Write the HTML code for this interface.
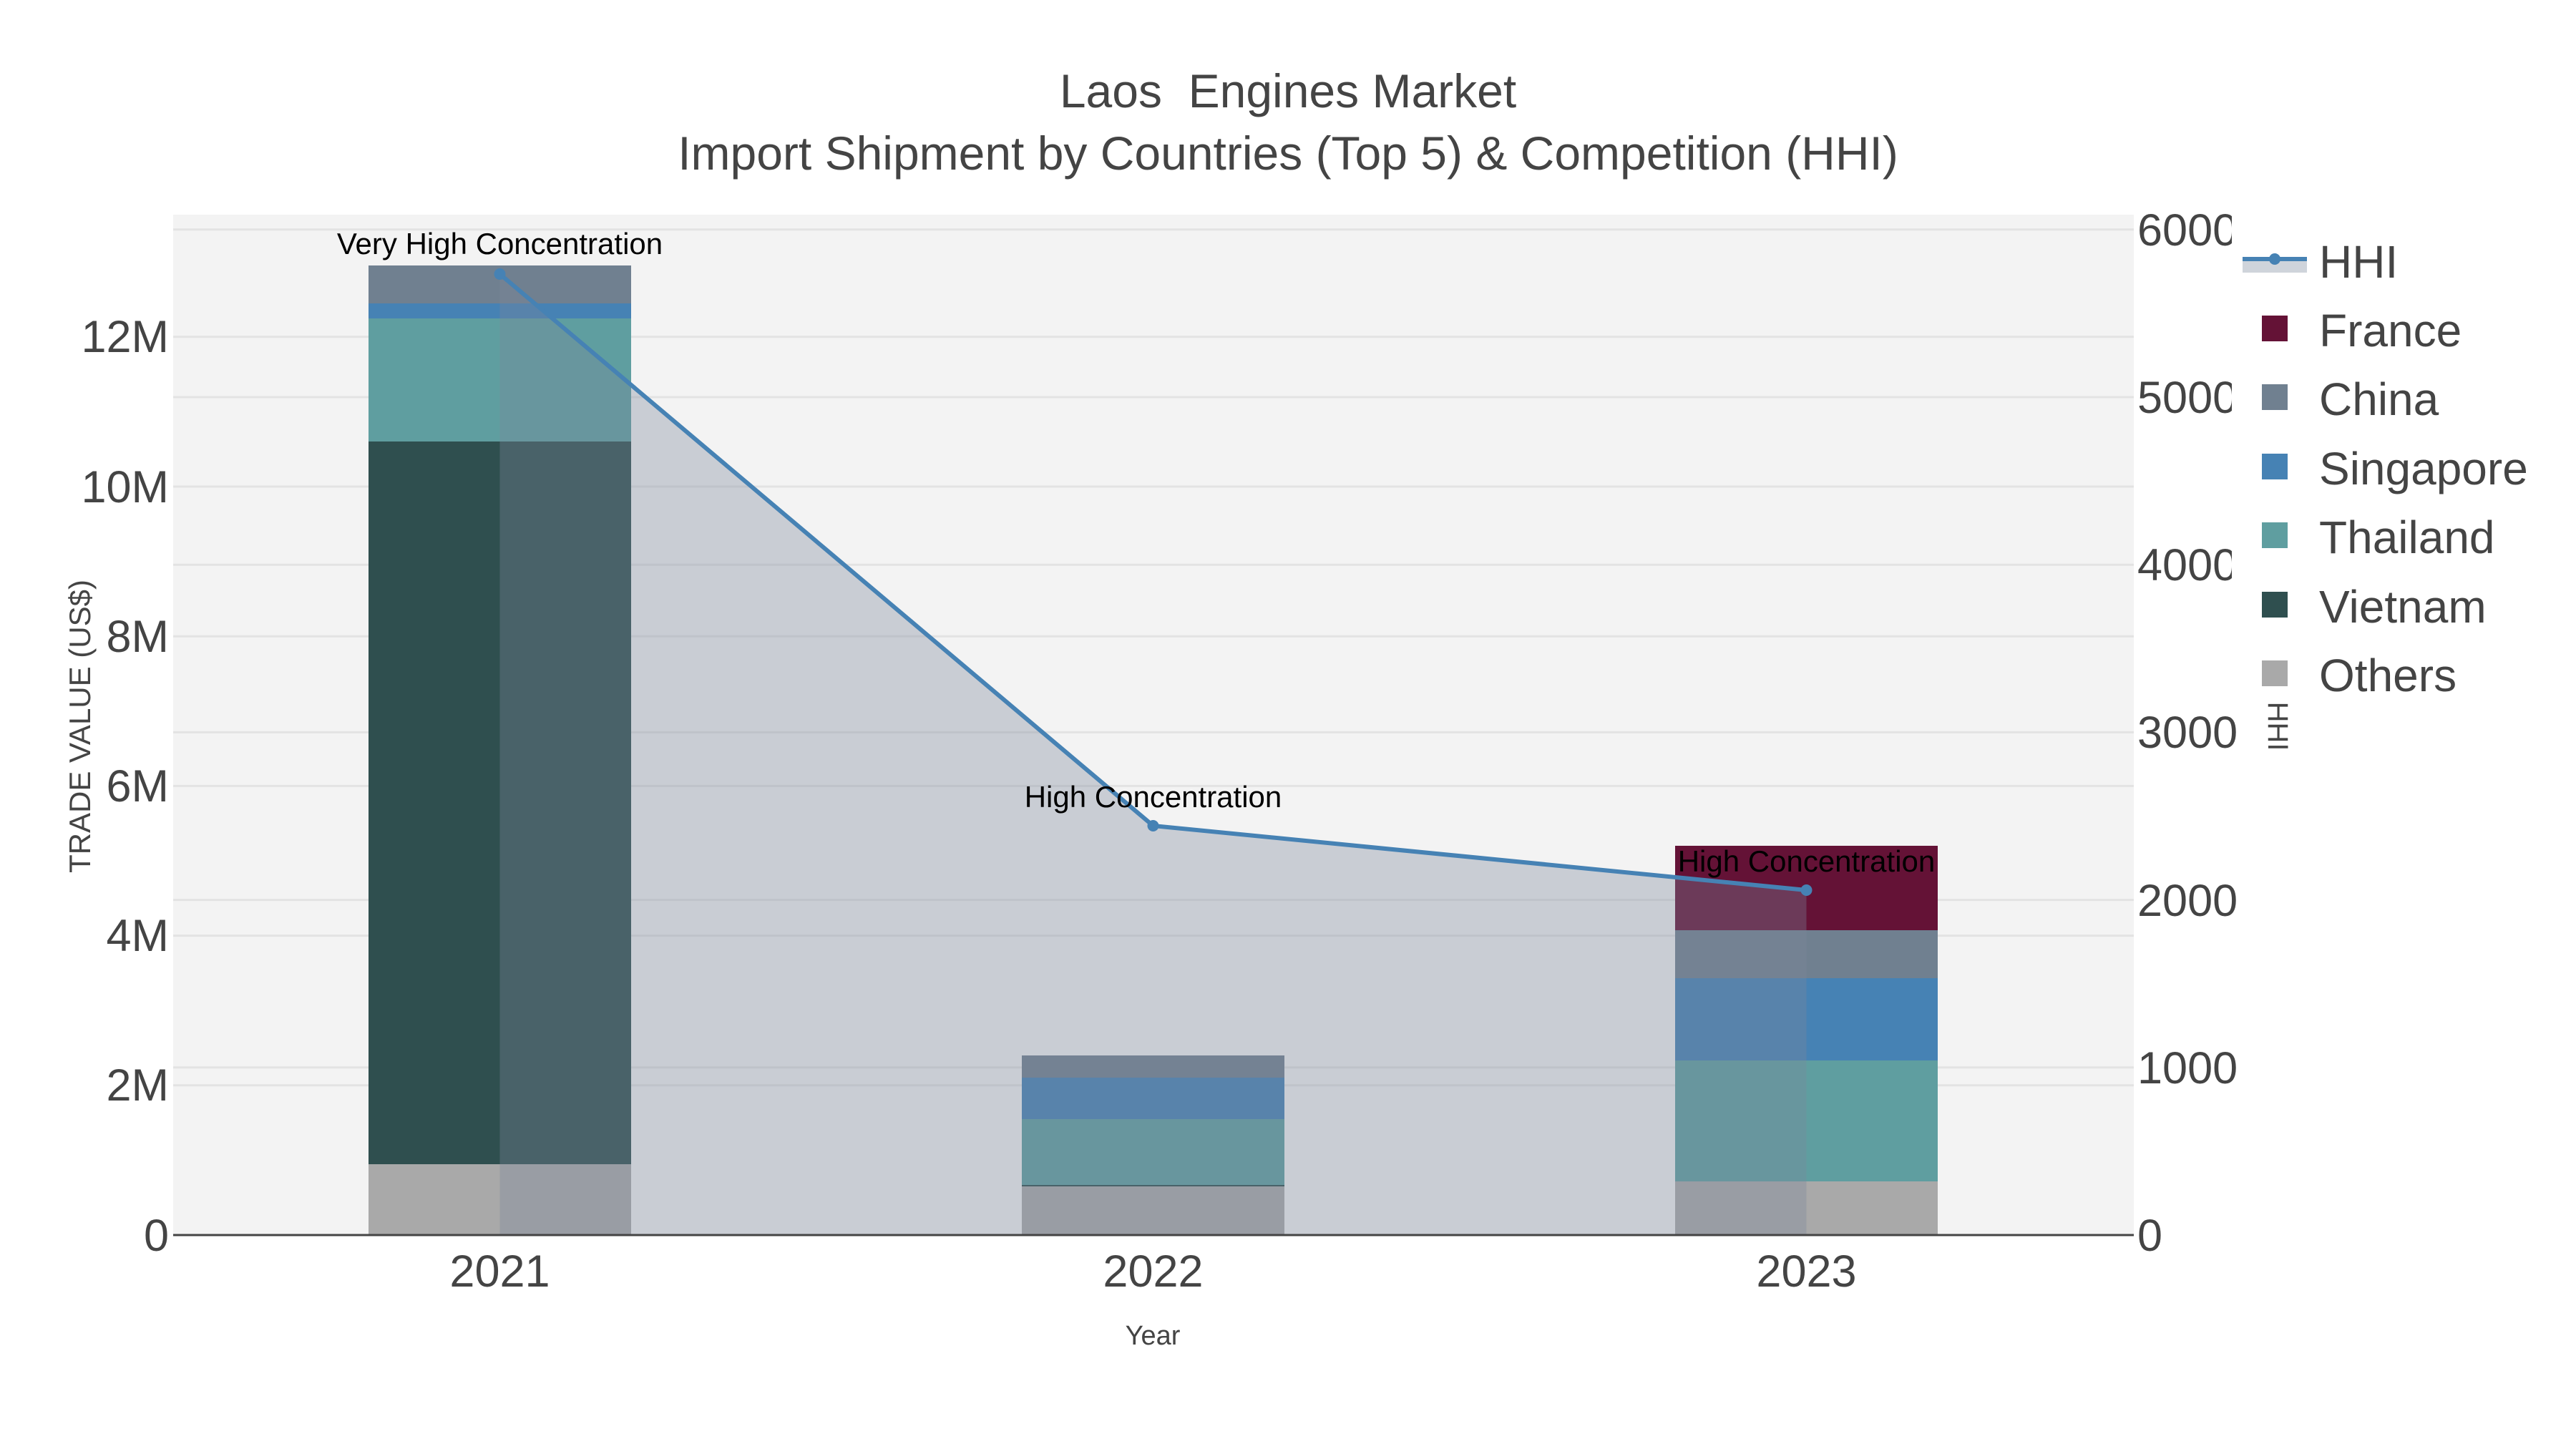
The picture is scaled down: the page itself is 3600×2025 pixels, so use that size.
<!DOCTYPE html>
<html><head><meta charset="utf-8"><style>html,body{margin:0;padding:0;background:#fff}svg{display:block}</style></head>
<body>
<svg width="3600" height="2025" viewBox="0 0 3600 2025" xmlns="http://www.w3.org/2000/svg" font-family="Liberation Sans, Arial, sans-serif">
<rect width="3600" height="2025" fill="#fff"/>
<rect x="242" y="300" width="2740" height="1426" fill="#f3f3f3"/>
<g stroke="#e3e3e3" stroke-width="3">
<line x1="242" x2="2982" y1="1516.8" y2="1516.8"/><line x1="242" x2="2982" y1="1307.6" y2="1307.6"/>
<line x1="242" x2="2982" y1="1098.4" y2="1098.4"/><line x1="242" x2="2982" y1="889.2" y2="889.2"/>
<line x1="242" x2="2982" y1="680" y2="680"/><line x1="242" x2="2982" y1="470.8" y2="470.8"/>
<line x1="242" x2="2982" y1="1491.8" y2="1491.8"/><line x1="242" x2="2982" y1="1257.6" y2="1257.6"/>
<line x1="242" x2="2982" y1="1023.4" y2="1023.4"/><line x1="242" x2="2982" y1="789.2" y2="789.2"/>
<line x1="242" x2="2982" y1="555" y2="555"/><line x1="242" x2="2982" y1="320.8" y2="320.8"/>
</g>
<!-- 2021 -->
<rect x="515" y="1627" width="367" height="99" fill="#a9a9a9"/>
<rect x="515" y="617" width="367" height="1010" fill="#2f4f4f"/>
<rect x="515" y="445" width="367" height="172" fill="#5f9ea0"/>
<rect x="515" y="424" width="367" height="21" fill="#4682b4"/>
<rect x="515" y="371" width="367" height="53" fill="#708090"/>
<!-- 2022 -->
<rect x="1428" y="1658" width="367" height="68" fill="#a9a9a9"/>
<rect x="1428" y="1656" width="367" height="2" fill="#2f4f4f"/>
<rect x="1428" y="1564" width="367" height="92" fill="#5f9ea0"/>
<rect x="1428" y="1506" width="367" height="58" fill="#4682b4"/>
<rect x="1428" y="1475" width="367" height="31" fill="#708090"/>
<!-- 2023 -->
<rect x="2341" y="1651" width="367" height="75" fill="#a9a9a9"/>
<rect x="2341" y="1482" width="367" height="169" fill="#5f9ea0"/>
<rect x="2341" y="1367" width="367" height="115" fill="#4682b4"/>
<rect x="2341" y="1300" width="367" height="67" fill="#708090"/>
<rect x="2341" y="1182" width="367" height="118" fill="#641236"/>
<polygon points="698.5,383 1611.5,1154 2524.5,1244 2524.5,1726 698.5,1726" fill="rgba(123,135,154,0.35)"/>
<line x1="242" x2="2982" y1="1726" y2="1726" stroke="#444" stroke-width="3"/>
<polyline points="698.5,383 1611.5,1154 2524.5,1244" fill="none" stroke="#4682b4" stroke-width="6"/>
<circle cx="698.5" cy="383" r="8" fill="#4682b4"/><circle cx="1611.5" cy="1154" r="8" fill="#4682b4"/><circle cx="2524.5" cy="1244" r="8" fill="#4682b4"/>
<g font-size="42" fill="#000" text-anchor="middle">
<text x="698.5" y="355">Very High Concentration</text>
<text x="1611.5" y="1128">High Concentration</text>
<text x="2524.5" y="1218">High Concentration</text>
</g>
<g font-size="66" fill="#444" text-anchor="middle">
<text x="1800" y="150" xml:space="preserve" style="white-space:pre">Laos  Engines Market</text>
<text x="1800" y="237">Import Shipment by Countries (Top 5) &amp; Competition (HHI)</text>
</g>
<g font-size="63" fill="#444" text-anchor="end">
<text x="236" y="1748">0</text><text x="236" y="1538">2M</text><text x="236" y="1329">4M</text>
<text x="236" y="1120">6M</text><text x="236" y="911">8M</text><text x="236" y="702">10M</text><text x="236" y="492">12M</text>
</g>
<g font-size="63" fill="#444" text-anchor="middle">
<text x="698.5" y="1798">2021</text><text x="1611.5" y="1798">2022</text><text x="2524.5" y="1798">2023</text>
</g>
<g font-size="63" fill="#444">
<text x="2987" y="1748">0</text><text x="2987" y="1514">1000</text><text x="2987" y="1280">2000</text>
<text x="2987" y="1045">3000</text><text x="2987" y="811">4000</text><text x="2987" y="577">5000</text><text x="2987" y="343">6000</text>
</g>
<rect x="3119" y="290" width="481" height="685" fill="#fff"/>
<text font-size="42" fill="#444" text-anchor="middle" transform="translate(126,1015) rotate(-90)">TRADE VALUE (US$)</text>
<text font-size="38" fill="#444" text-anchor="middle" x="1611" y="1879">Year</text>
<text font-size="40" fill="#444" text-anchor="middle" transform="translate(3170,1015) rotate(90)">HHI</text>
<rect x="3134" y="363" width="90" height="18" fill="#cfd4db"/>
<line x1="3134" x2="3224" y1="362" y2="362" stroke="#4682b4" stroke-width="6"/>
<circle cx="3179" cy="362" r="8" fill="#4682b4"/>
<rect x="3161" y="441" width="36" height="36" fill="#641236"/>
<rect x="3161" y="537" width="36" height="36" fill="#708090"/>
<rect x="3161" y="634" width="36" height="36" fill="#4682b4"/>
<rect x="3161" y="730" width="36" height="36" fill="#5f9ea0"/>
<rect x="3161" y="827" width="36" height="36" fill="#2f4f4f"/>
<rect x="3161" y="923" width="36" height="36" fill="#a9a9a9"/>
<g font-size="64" fill="#444">
<text x="3241" y="388">HHI</text><text x="3241" y="484">France</text><text x="3241" y="580">China</text>
<text x="3241" y="677">Singapore</text><text x="3241" y="773">Thailand</text><text x="3241" y="870">Vietnam</text><text x="3241" y="966">Others</text>
</g>
</svg>
</body></html>
